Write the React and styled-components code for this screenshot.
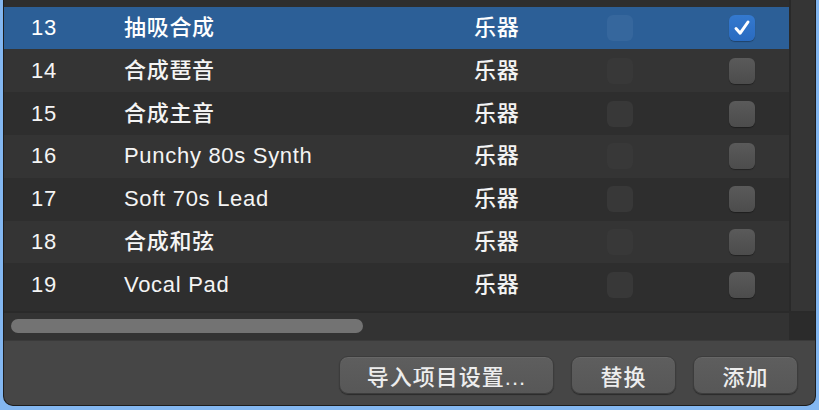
import React from "react";
import styled, { createGlobalStyle, css } from "styled-components";

const GlobalStyle = createGlobalStyle`
  html, body {
    margin: 0;
    padding: 0;
    background: #83b7f1;
    overflow: hidden;
  }
  * { box-sizing: border-box; }
`;

const FONT = `"Liberation Sans", "Noto Sans CJK SC", sans-serif`;

// window frame
const Window = styled.div`
  width: 813px;
  height: 406px;
  margin-left: 3px;
  background: #464646;
  border: 1px solid #1d1d1d;
  border-top: none;
  border-radius: 0 0 10px 10px;
  overflow: hidden;
  display: grid;
  grid-template-columns: 785px 1fr;
  grid-template-rows: 311px 29px 1fr;
  font-family: ${FONT};
  font-weight: 500;
`;

const List = styled.div`
  display: flex;
  flex-direction: column;
  overflow: hidden;
  background: #2e2e2e;
`;

const Sliver = styled.div`
  height: 6.6px;
  flex: none;
`;

const Row = styled.div`
  height: 42.8px;
  flex: none;
  display: grid;
  grid-template-columns: 120px 350px 133px 122px 1fr;
  align-items: center;
  color: #f4f4f4;
  font-size: 22px;
  letter-spacing: 0.7px;
  line-height: 1;
  background: ${(p) => (p.$odd ? "#343434" : "#2e2e2e")};
  ${(p) =>
    p.$selected &&
    css`
      background: #2c5f97;
      color: #ffffff;
    `}
`;

const Num = styled.span`
  padding-left: 27px;
`;

const Box = styled.span`
  width: 26px;
  height: 26px;
  border-radius: 6px;
  display: flex;
  align-items: center;
  justify-content: center;
  background: ${(p) => (p.$selected ? "#36679d" : "#383838")};
  ${(p) =>
    p.$enabled &&
    css`
      background: linear-gradient(#5a5a5a, #4c4c4c);
      box-shadow: 0 1px 1px rgba(0, 0, 0, 0.35);
    `}
  ${(p) =>
    p.$checked &&
    css`
      background: linear-gradient(#3479cf, #2a6bc0);
      box-shadow: 0 1px 1px rgba(0, 0, 0, 0.3);
    `}
`;

const VScroll = styled.div`
  background: #353535;
  border-left: 2px solid #292929;
`;

const HScroll = styled.div`
  background: #333333;
  border-top: 2px solid #2a2a2a;
  padding: 6px 0 0 7px;
`;

const Thumb = styled.div`
  width: 352px;
  height: 14px;
  border-radius: 7px;
  background: #737373;
`;

const Corner = styled.div`
  background: #2b2b2b;
  border-top: 2px solid #2a2a2a;
`;

const Footer = styled.div`
  grid-column: 1 / 3;
  display: flex;
  justify-content: flex-end;
  align-items: flex-start;
  gap: 17px;
  padding: 15px 17px 0 0;
  border-top: 1px solid #3a3a3a;
`;

const Button = styled.button`
  width: ${(p) => p.$w}px;
  height: 38px;
  border-radius: 9px;
  border: 1px solid #3c3c3c;
  background: linear-gradient(#5e5e5e, #575757);
  box-shadow: 0 1px 1px rgba(0, 0, 0, 0.4), inset 0 1px 0 rgba(255, 255, 255, 0.06);
  color: #ededed;
  font-family: ${FONT};
  font-weight: 500;
  font-size: 22px;
  letter-spacing: 1px;
  padding: 0;
  display: flex;
  align-items: center;
  justify-content: center;
`;

const Check = () => (
  <svg width="22" height="22" viewBox="0 0 22 22">
    <path
      d="M5 11.5 L9.2 16.2 L17 5"
      fill="none"
      stroke="#ffffff"
      strokeWidth="3"
      strokeLinecap="round"
      strokeLinejoin="round"
    />
  </svg>
);

const rows = [
  { n: 13, name: "抽吸合成", checked: true },
  { n: 14, name: "合成琶音" },
  { n: 15, name: "合成主音" },
  { n: 16, name: "Punchy 80s Synth" },
  { n: 17, name: "Soft 70s Lead" },
  { n: 18, name: "合成和弦" },
  { n: 19, name: "Vocal Pad" },
];

export default function App() {
  return (
    <>
      <GlobalStyle />
      <Window>
        <List>
          <Sliver />
          {rows.map((r, i) => (
            <Row key={r.n} $selected={r.checked} $odd={i % 2 === 1}>
              <Num>{r.n}</Num>
              <span>{r.name}</span>
              <span>乐器</span>
              <Box $selected={r.checked} />
              <Box $enabled $checked={r.checked}>
                {r.checked && <Check />}
              </Box>
            </Row>
          ))}
        </List>
        <VScroll />
        <HScroll>
          <Thumb />
        </HScroll>
        <Corner />
        <Footer>
          <Button $w={215}>导入项目设置...</Button>
          <Button $w={105}>替换</Button>
          <Button $w={105}>添加</Button>
        </Footer>
      </Window>
    </>
  );
}
